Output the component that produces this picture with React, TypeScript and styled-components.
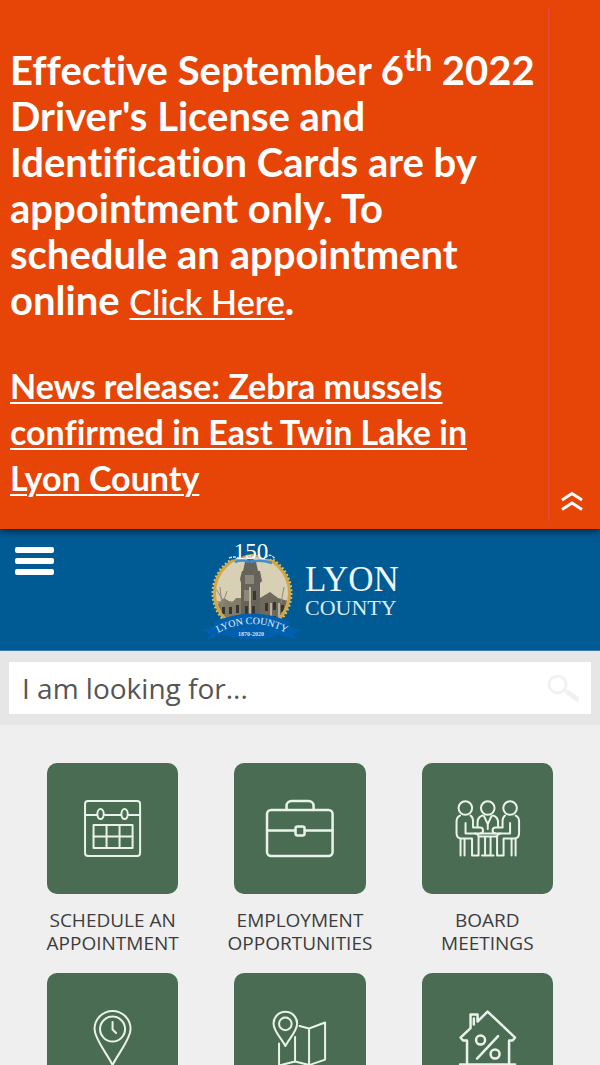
import React from "react";
import styled, { createGlobalStyle } from "styled-components";

const GlobalStyle = createGlobalStyle`
  *, *::before, *::after { box-sizing: border-box; }
  html, body { margin: 0; padding: 0; background: #efefef; }
  body { font-family: "Open Sans", "Noto Sans", sans-serif; color: #444; }
  button, input { font: inherit; }
`;

const Alert = styled.section`
  position: relative;
  z-index: 1;
  display: flex;
  background: #e64507;
  color: #fff;
  padding: 8px 0;
  font-family: Lato, "Open Sans", sans-serif;
  font-variant-ligatures: none;
  box-shadow: 0 1px 8px rgba(0, 0, 0, 0.75);
`;

const AlertBody = styled.div`
  flex: 1;
  min-width: 0;
  padding: 39px 8px 20px 10px;
  border-right: 2px solid #e4483a;
`;

const AlertTitle = styled.h2`
  margin: 0;
  font-size: 40px;
  font-weight: 700;
  line-height: 46px;

  sup {
    font-size: 30px;
    line-height: 0;
  }
`;

const AlertLink = styled.a<{ $weight: number }>`
  color: #fff;
  font-size: 34px;
  font-weight: ${(p) => p.$weight};
  text-decoration: underline;
  text-decoration-thickness: 2px;
  text-underline-offset: 3px;
`;

const NewsTitle = styled.h2`
  margin: 38px 0 0;
  font-size: 34px;
  line-height: 46px;
`;

const CollapseButton = styled.button`
  align-self: flex-end;
  width: 50px;
  height: 40px;
  padding: 0 0 0 10px;
  border: 0;
  background: none;
  color: #fff;

  svg { display: block; }
`;

const Header = styled.header`
  display: grid;
  grid-template-columns: 1fr auto 1fr;
  align-items: start;
  height: 122px;
  padding: 12px 15px 0;
  background: #005a94;
  border-bottom: 1px solid #3f7aa8;
`;

const MenuButton = styled.button`
  display: flex;
  flex-direction: column;
  gap: 5px;
  width: 39px;
  margin: 6px 0 0;
  padding: 0;
  border: 0;
  background: none;
`;

const MenuBar = styled.span`
  height: 6px;
  border-radius: 2px;
  background: #fff;
`;

const LogoLink = styled.a`
  display: block;
  svg { display: block; overflow: visible; }
`;

const SearchBar = styled.form`
  padding: 11px 9px;
  background: #e6e6e6;
`;

const SearchField = styled.div`
  display: flex;
  align-items: center;
  height: 52px;
  padding: 0 12px 0 13px;
  background: #fff;
`;

const SearchInput = styled.input`
  flex: 1;
  min-width: 0;
  padding: 0;
  border: 0;
  outline: 0;
  background: none;
  font-size: 28px;
  line-height: 38px;
  color: #555;

  &::placeholder { color: #555; opacity: 1; }
`;

const SearchButton = styled.button`
  padding: 0;
  border: 0;
  background: none;
  color: #f1f1f1;

  svg { display: block; }
`;

const Tiles = styled.nav`
  display: grid;
  grid-template-columns: repeat(3, 1fr);
  row-gap: 18px;
  padding: 38px 19px 0;
`;

const Tile = styled.a`
  display: flex;
  flex-direction: column;
  align-items: center;
  color: #3c3c3c;
  text-align: center;
  text-decoration: none;
`;

const TileIcon = styled.span<{ $stroke: number }>`
  display: block;
  width: 70%;
  aspect-ratio: 1;
  border-radius: 10px;
  background: #496c53;

  svg {
    display: block;
    width: 100%;
    height: 100%;
    fill: none;
    stroke: #eaf3ea;
    stroke-width: ${(p) => p.$stroke};
    stroke-linecap: round;
    stroke-linejoin: round;
  }
`;

const TileLabel = styled.span`
  width: 150px;
  margin-top: 15px;
  font-size: 19px;
  line-height: 23px;
`;

const CalendarIcon = () => (
  <svg viewBox="0 0 131 131" aria-hidden="true">
    <rect x="38" y="38" width="55" height="55" rx="3" />
    <path d="M38 52h12M57 52h17M81 52h12" />
    <ellipse cx="53.5" cy="51" rx="3.2" ry="5" />
    <ellipse cx="77.5" cy="51" rx="3.2" ry="5" />
    <rect x="46.500" y="62" width="39" height="23" />
    <path d="M59.500 62v23M72.500 62v23M46.500 73.5h39" />
  </svg>
);

const BriefcaseIcon = () => (
  <svg viewBox="0 0 131 131" aria-hidden="true">
    <rect x="33" y="47" width="65.500" height="46" rx="4" />
    <path d="M52.500 47v-4a5 5 0 0 1 5-5h17a5 5 0 0 1 5 5v4M33 67.500h28M71 67.500h27.500" />
    <rect x="61.500" y="63.500" width="9" height="9" rx="2" />
  </svg>
);

const MeetingIcon = () => (
  <svg viewBox="0 0 131 131" aria-hidden="true">
    <circle cx="43.300" cy="45" r="6.800" />
    <circle cx="65.700" cy="45" r="6.800" />
    <circle cx="88" cy="45" r="6.800" />
    <path d="M38 52.500Q34.500 54 34.500 58.500V70q0 5.500 5 5.500h10.500V92.500h6.500V74q0-3.500-3.500-3.500H43.500V60" />
    <path d="M48.500 52.500Q51 54 51 58v6.500h7q3 0 3 3t-3 3h-5" />
    <path d="M38.500 76v16.500M42.500 76v16.500" />
    <path d="M93.500 52.500Q97 54 97 58.500V70q0 5.500-5 5.500H81.500V92.500H75V74q0-3.500 3.500-3.500H88V60" />
    <path d="M83 52.500Q80.500 54 80.500 58v6.500h-7q-3 0-3 3t3 3h5" />
    <path d="M89.500 76v16.500M93.500 76v16.500" />
    <path d="M60.500 52.500Q55.500 54 55.500 59.500v4M71 52.500Q76 54 76 59.500v4M62 53l3.700 8 3.700-8M65.700 61v5" />
    <path d="M58 70.500h15.500M57 73.500h17.500M63 74v18.500M68.500 74v18.500M60 92.500h11.500" />
  </svg>
);

const ClockPinIcon = () => (
  <svg viewBox="0 0 131 131" aria-hidden="true">
    <path d="M65.500 92C60.500 81 47.500 66.500 47.500 56a18 18 0 0 1 36 0c0 10.500-13 25-18 36z" />
    <circle cx="65.500" cy="56" r="12.500" />
    <path d="M65.500 49v7.500l3.500 3.500" />
  </svg>
);

const MapIcon = () => (
  <svg viewBox="0 0 131 131" aria-hidden="true">
    <path d="M51.300 73C48 66 39.500 58.500 39.500 50.500a11.800 11.800 0 0 1 23.600 0C63.100 58.500 54.500 66 51.300 73z" />
    <circle cx="51.300" cy="50.800" r="6.300" />
    <path d="M65.500 53l9.500 2.500 16-6v37L75 92l-14-3.500L45 92.500V70.500M61 64v24.500M75 55.500V92" />
  </svg>
);

const HousePercentIcon = () => (
  <svg viewBox="0 0 131 131" aria-hidden="true">
    <path d="M45 91.500V67.500h-4l-2.500-3L48.500 55V41.500h7v7l10-10 27.500 26-2.500 3H87v24M51.800 45.500v6M38 91.500h55" />
    <circle cx="58.500" cy="67" r="4.500" />
    <circle cx="73" cy="81" r="4.500" />
    <path d="M76 63L55 85.500" />
  </svg>
);

const Logo = () => (
  <svg width="200" height="102" viewBox="0 0 200 102" role="img" aria-label="Lyon County">
    <defs>
      <clipPath id="seal"><circle cx="52" cy="52" r="36" /></clipPath>
      <path id="ribbonArc" d="M14 94Q52 72 90 94" />
    </defs>
    <circle cx="52" cy="52" r="37" fill="#d8d0b5" />
    <g clipPath="url(#seal)">
      <path d="M16 60h72v32H16z" fill="#a39d88" />
      <path d="M16 66l8-9 8 5 4-5h5v32H16z" fill="#817b6a" />
      <path d="M60 57l10-6 8 6 10 3v30H60z" fill="#6f6a5d" />
      <path d="M40 38l2-8h1l2-9q5-8 11 0l2 9h2l2 10-2 2v48H41V42z" fill="#66635a" />
      <path d="M45 34h9v9h-9zM44 49h5v11h-5z" fill="#8d8877" />
      <path d="M22 66h3v7h-3zM29 66h3v7h-3zM36 64h3v8h-3zM22 77h3v7h-3zM29 77h3v7h-3zM36 77h3v7h-3zM45 65h3v8h-3zM53 50h3v9h-3zM52 65h3v8h-3zM65 62h3v8h-3zM73 61h3v8h-3zM81 64h3v7h-3zM65 75h3v8h-3zM73 75h3v8h-3z" fill="#37352f" />
      <path d="M70 62h2v24h-2zM78 62h2v22h-2zM49 46h2v30h-2z" fill="#b9b29a" />
      <path d="M16 48l9 14M20 46l2 20M27 50l-6 18M84 46l-3 16" stroke="#8f8975" strokeWidth="1" />
    </g>
    <circle cx="52" cy="52" r="37.500" fill="none" stroke="#d1a746" strokeWidth="3" />
    <circle cx="52" cy="52" r="39.500" fill="none" stroke="#e0ba5c" strokeWidth="2" strokeDasharray="2 2" />
    <path d="M27 0h49v17q-8 2-13 0-11-8-23 0-6 2-13 2z" fill="#005a94" />
    <path d="M29 17q5-2 9 0t9-1 9 2 9-1 10 1" fill="none" stroke="#cfe2f2" strokeWidth="1.500" strokeDasharray="3 1" />
    <path d="M35 21q7-3 14 0M50 21q10-3 22 1" fill="none" stroke="#3c8fd0" strokeWidth="2.500" />
    <text x="51" y="18" textAnchor="middle" fill="#fff" fontFamily="Liberation Serif, serif" fontSize="23">150</text>
    <path d="M2 89l12-3v-5q38-17 76 0v5l12 3-8 4 2 5-14-4q-30 8-60 0l-14 4 2-5z" fill="#0060ad" />
    <text fill="#e6f1fa" fontFamily="Liberation Serif, serif" fontSize="10">
      <textPath href="#ribbonArc" startOffset="50%" textAnchor="middle">LYON COUNTY</textPath>
    </text>
    <text x="51" y="95" textAnchor="middle" fill="#d3e5f4" fontFamily="Liberation Serif, serif" fontWeight="700" fontSize="6">1870-2020</text>
    <text x="105" y="50" fill="#eef6fb" fontFamily="Liberation Serif, serif" fontSize="35">LYON</text>
    <text x="105" y="74" fill="#dcebf5" fontFamily="Liberation Serif, serif" fontSize="22">COUNTY</text>
  </svg>
);

const tiles = [
  { label: ["SCHEDULE AN", "APPOINTMENT"], Icon: CalendarIcon, stroke: 2 },
  { label: ["EMPLOYMENT", "OPPORTUNITIES"], Icon: BriefcaseIcon, stroke: 2.5 },
  { label: ["BOARD", "MEETINGS"], Icon: MeetingIcon, stroke: 2 },
];

const moreTiles = [
  { name: "Locations and hours", Icon: ClockPinIcon, stroke: 2 },
  { name: "Maps", Icon: MapIcon, stroke: 2 },
  { name: "Property tax", Icon: HousePercentIcon, stroke: 2.5 },
];

export default function App() {
  return (
    <>
      <GlobalStyle />
      <Alert>
        <AlertBody>
          <AlertTitle>
            Effective September 6<sup>th</sup> 2022
            <br />
            Driver's License and
            <br />
            Identification Cards are by appointment only. To
            <br />
            schedule an appointment online{" "}
            <AlertLink href="#appointment" $weight={600}>Click Here</AlertLink>.
          </AlertTitle>
          <NewsTitle>
            <AlertLink href="#news" $weight={700}>
              News release: Zebra mussels confirmed in East Twin Lake in Lyon County
            </AlertLink>
          </NewsTitle>
        </AlertBody>
        <CollapseButton type="button" aria-label="Collapse alert">
          <svg width="24" height="40" viewBox="0 0 24 40" fill="none" stroke="#fff" strokeWidth="3">
            <path d="M2 19l10-6.500 10 6.500M2 28.500l10-6.500 10 6.500" />
          </svg>
        </CollapseButton>
      </Alert>
      <Header>
        <MenuButton type="button" aria-label="Menu">
          <MenuBar />
          <MenuBar />
          <MenuBar />
        </MenuButton>
        <LogoLink href="#home">
          <Logo />
        </LogoLink>
      </Header>
      <SearchBar>
        <SearchField>
          <SearchInput type="text" aria-label="Search" placeholder="I am looking for..." />
          <SearchButton type="button" aria-label="Submit search">
            <svg width="32" height="28" viewBox="0 0 32 28" fill="none" stroke="currentColor">
              <circle cx="10.500" cy="10.500" r="8.500" strokeWidth="3" />
              <path d="M17 15.500l5 4" strokeWidth="3" />
              <path d="M21 18.500L30 25" strokeWidth="5" strokeLinecap="round" />
            </svg>
          </SearchButton>
        </SearchField>
      </SearchBar>
      <Tiles aria-label="Quick links">
        {tiles.map(({ label, Icon, stroke }) => (
          <Tile key={label[0]} href="#tile">
            <TileIcon $stroke={stroke}><Icon /></TileIcon>
            <TileLabel>{label[0]}<br />{label[1]}</TileLabel>
          </Tile>
        ))}
        {moreTiles.map(({ name, Icon, stroke }) => (
          <Tile key={name} href="#tile" aria-label={name}>
            <TileIcon $stroke={stroke}><Icon /></TileIcon>
          </Tile>
        ))}
      </Tiles>
    </>
  );
}
